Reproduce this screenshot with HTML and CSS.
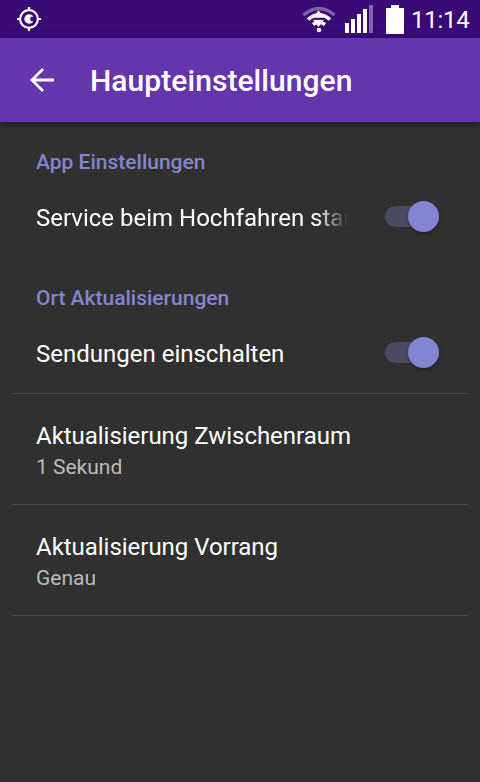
FILE: index.html
```html
<!DOCTYPE html>
<html lang="de">
<head>
<meta charset="utf-8">
<title>Haupteinstellungen</title>
<link rel="stylesheet" href="styles.css">
</head>
<body>
<div class="status">
  <svg class="gps" width="24" height="24" viewBox="0 0 24 24" fill="none" stroke="#fff"><circle cx="12" cy="12" r="8.900" stroke-width="2.100"/><path d="M12 0V4M12 20V24M0 12H4M20 12H24" stroke-width="2.200"/><path d="M16.300 9.800C15.500 8 14 7.300 12 7.300A4.700 4.700 0 0 0 12 16.700C14 16.700 15.500 16 16.300 14.200H14.200L13.300 13.300V10.700L14.200 9.800Z" fill="#fff" stroke="none"/></svg>
  <svg class="wifi" width="34" height="28" viewBox="0 0 34 28" fill="none"><path d="M1.500 9Q17 -4 32.500 9" stroke="#7f61aa" stroke-width="3.300"/><path d="M6 13.500Q17 4 28 13.500M11 18.500Q17 14 23 18.500" stroke="#fff" stroke-width="3.600"/><path d="M16.500 4.200L22 11.800H11ZM11 13.800H22L16.500 21Z" fill="#fff"/><path d="M11 12.800H22" stroke="#3a0b77" stroke-width="1.500"/><circle cx="17" cy="24" r="2.300" fill="#fff"/></svg>
  <svg class="signal" width="28" height="28" viewBox="0 0 28 28" fill="#fff"><path d="M0 18h4v10H0zM6 14h4v14H6zM12 9h4v19h-4zM18 4h4v24h-4z"/><path d="M24 0h4v28h-4z" fill="#8467ad"/></svg>
  <svg class="battery" width="18" height="29" viewBox="0 0 18 29"><path d="M5 0h8v3h5v26H0V3h5z" fill="#fff"/></svg>
  <span class="clock">11:14</span>
</div>
<header class="bar">
  <svg width="24" height="24" viewBox="0 0 24 24" fill="none" stroke="#fff" stroke-width="2.800"><path d="M24 12H2M13 1L2 12L13 23"/></svg>
  <h1>Haupteinstellungen</h1>
</header>
<main>
  <h2>App Einstellungen</h2>
  <div class="row"><span class="title fade">Service beim Hochfahren starten</span><span class="switch"></span></div>
  <h2 class="second">Ort Aktualisierungen</h2>
  <div class="row"><span class="title">Sendungen einschalten</span><span class="switch"></span></div>
  <div class="item"><div class="title">Aktualisierung Zwischenraum</div><div class="sub">1 Sekund</div></div>
  <div class="item last"><div class="title">Aktualisierung Vorrang</div><div class="sub">Genau</div></div>
</main>
</body>
</html>
```
FILE: styles.css
```css
* { box-sizing: border-box; }
body { margin: 0; background: #303030; color: #fff; font-family: Roboto, sans-serif; height: 782px; overflow: hidden; }
.status { height: 38px; background: #3a0b77; display: flex; align-items: center; padding-left: 17px; }
.gps { margin-right: auto; }
.wifi { margin: 2px 9px 0 0; }
.signal { margin-right: 13px; }
.battery { margin-right: 7px; }
.clock { width: 69px; font-size: 24px; line-height: 38px; letter-spacing: -.25px; padding-top: 2px; }
.bar { height: 84px; background: #6535ab; display: flex; align-items: center; padding-left: 30px; box-shadow: 0 2px 8px rgba(0,0,0,.45); position: relative; }
h1 { margin: 2px 0 0 36px; font-size: 30px; font-weight: 500; line-height: 36px; letter-spacing: .06px; }
h2 { margin: 0; padding: 0 24px; font-size: 21px; font-weight: 500; line-height: 24px; color: #8385d3; }
main { padding: 28px 12px 0; }
.row { height: 83px; padding: 0 29px 0 24px; display: flex; align-items: center; }
.title { font-size: 24px; line-height: 32px; letter-spacing: -.03px; }
.row .title { padding-top: 5px; letter-spacing: 0; }
.fade { width: 312px; overflow: hidden; white-space: nowrap; -webkit-mask-image: linear-gradient(to right, #000 280px, transparent 312px); mask-image: linear-gradient(to right, #000 280px, transparent 312px); }
.second { margin-top: 29px; }
.switch { margin: 2px 0 0 auto; width: 54px; height: 21px; border-radius: 11px; background: #4b4a63; position: relative; flex: none; }
.switch::after { content: ""; position: absolute; right: 0; top: -5px; width: 31px; height: 31px; border-radius: 50%; background: #8385d3; box-shadow: 0 1px 3px rgba(0,0,0,.4); }
.item { height: 111px; border-top: 1px solid #4a4a4a; padding: 26px 24px 0; }
.last { height: 112px; border-bottom: 1px solid #4a4a4a; }
.sub { font-size: 21px; line-height: 30px; color: #bcbcbc; }
```
